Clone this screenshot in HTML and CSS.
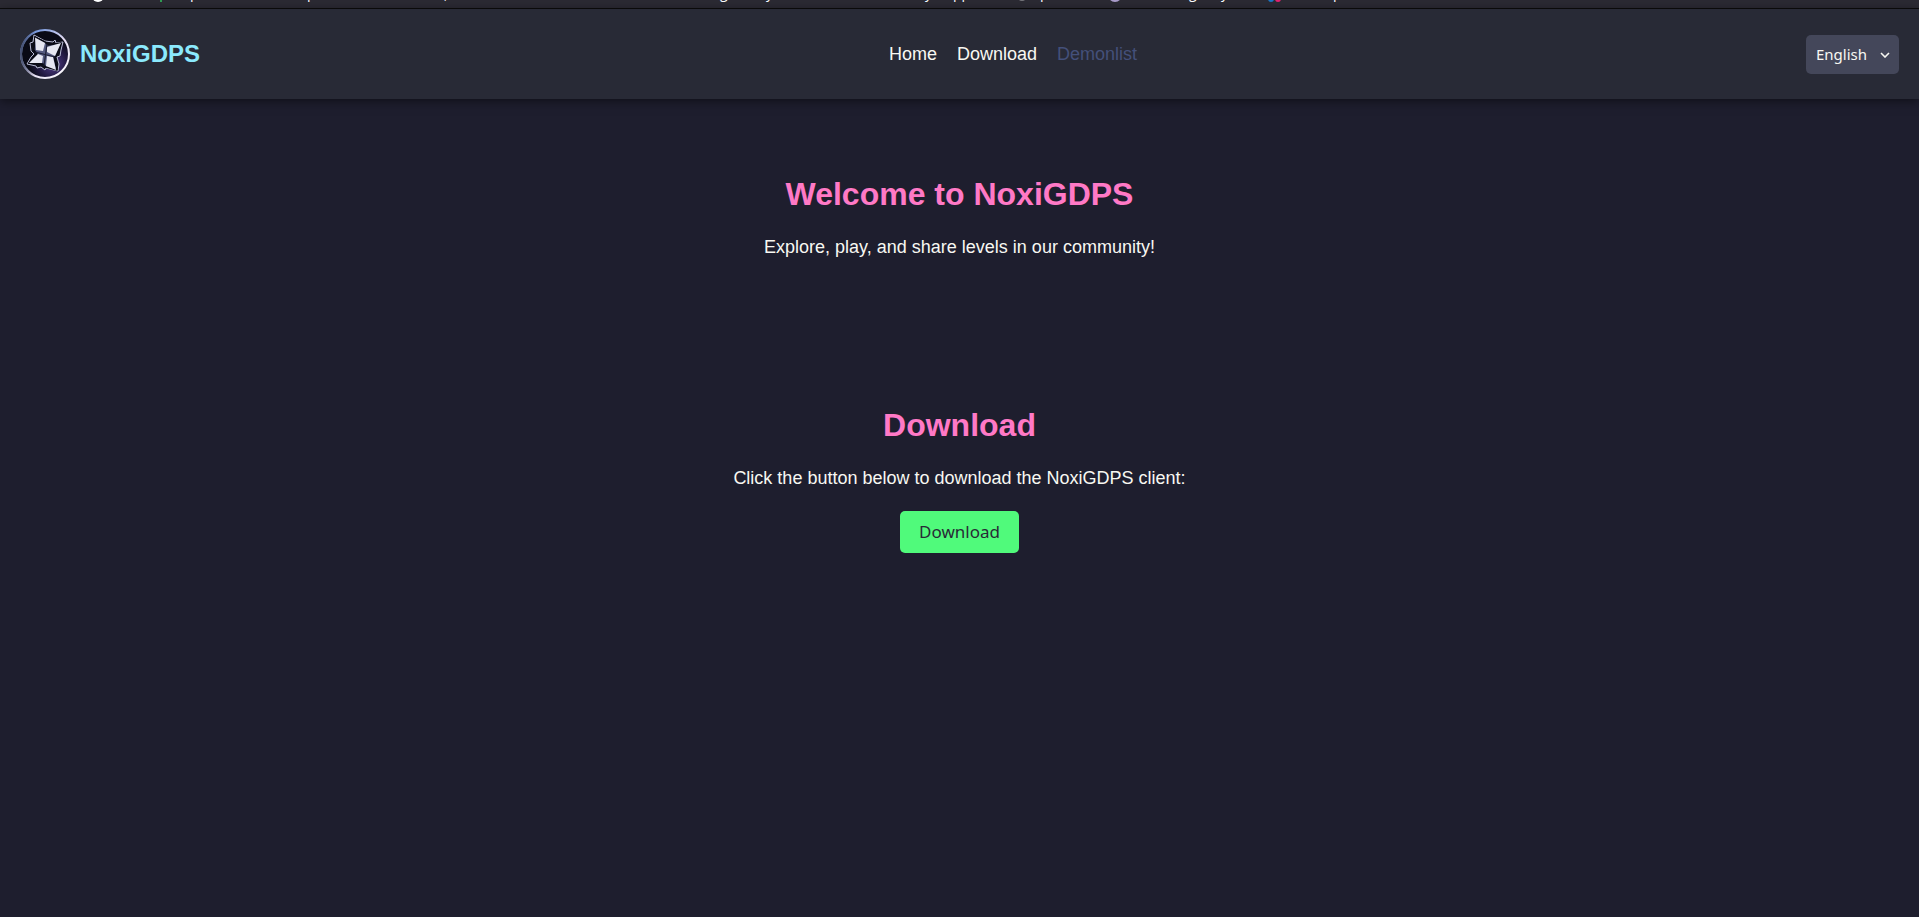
FILE: index.html
```html
<!DOCTYPE html>
<html lang="en">
<head>
<meta charset="utf-8">
<title>NoxiGDPS</title>
<link rel="stylesheet" href="styles.css">
</head>
<body>
<div class="bookmarks" aria-hidden="true">
  <svg class="bookmarks-row" height="8">
    <circle cx="98" cy="-4" r="6" fill="#fff"/>
    <rect x="160" y="0" width="2" height="2" fill="#2f9a52"/>
    <g class="bookmarks-text">
      <text x="190" y="-2">p</text><text x="307" y="-2">p</text><text x="444" y="-1">,</text>
      <text x="720" y="-2">g</text><text x="766" y="-2">y</text><text x="925" y="-2">y</text>
      <text x="953" y="-2">pp</text><text x="1040" y="-2">p</text>
      <text x="1189" y="-2">g</text><text x="1221" y="-2">y</text><text x="1333" y="-2">p</text>
    </g>
    <circle cx="1022" cy="-3" r="4" fill="#77777c"/>
    <circle cx="1115" cy="-5" r="6" fill="none" stroke="#a99bc9" stroke-width="2"/>
    <circle cx="1271" cy="-1" r="3" fill="#1976c5"/>
    <circle cx="1278" cy="-1" r="3" fill="#e3206f"/>
  </svg>
</div>
<header class="header">
  <div class="brand">
    <svg class="brand-logo" viewBox="0 0 50 50" role="img" aria-label="NoxiGDPS logo">
      <defs>
        <linearGradient id="ring" x1="0" y1="0" x2="1" y2="1">
          <stop offset="0" stop-color="#5874b8"/>
          <stop offset=".2" stop-color="#7f9ee0"/>
          <stop offset=".55" stop-color="#e4dcf2"/>
          <stop offset="1" stop-color="#fff"/>
        </linearGradient>
        <linearGradient id="ring-shade" x1="0" y1="0" x2="1" y2="0">
          <stop offset="0" stop-color="#39405a" stop-opacity=".85"/>
          <stop offset=".3" stop-color="#39405a" stop-opacity="0"/>
        </linearGradient>
        <radialGradient id="glow" cx=".66" cy=".7" r=".5">
          <stop offset="0" stop-color="#54408c"/>
          <stop offset=".6" stop-color="#221a42"/>
          <stop offset="1" stop-color="#090a15"/>
        </radialGradient>
      </defs>
      <circle cx="25" cy="25" r="24" fill="url(#glow)"/>
      <circle cx="25" cy="25" r="24" fill="none" stroke="url(#ring)" stroke-width="2"/>
      <circle cx="25" cy="25" r="24" fill="none" stroke="url(#ring-shade)" stroke-width="2"/>
      <path d="M14 6 25 12 33 13 35 11 36 14 43 13 41 21 40 27 37 28 39 35 38 42 26 39 25 41 21 38 17 39 16 37 7 35 11 28 14 25 11 22 10 14 13 13Z" fill="#0d0e1b" stroke="#b9bcd6" stroke-width="1" stroke-linejoin="round"/>
      <path d="M15 8 25 13 28 16 41 14 36 27 34 28 37 41 26 38 23 35 9 34 17 25 14 21Z" fill="#555a80" stroke="#090a14" stroke-width="1.4" stroke-linejoin="round"/>
      <g fill="#e6e7f2">
        <path d="M15 8.500 25 14 23 22 16 21Z"/>
        <path d="M27 18 41 14 35 27 27 23Z"/>
        <path d="M18 25 23 27 22 34 9 34Z"/>
        <path d="M27 27 33 28 36 41 26 37Z"/>
      </g>
      <path d="M27 15 24 37M15 23 35 28" fill="none" stroke="#1b1e35" stroke-width="1.2"/>
    </svg>
    <span class="brand-name">NoxiGDPS</span>
  </div>
  <nav class="nav">
    <a class="nav-link" href="#home">Home</a>
    <a class="nav-link" href="#download">Download</a>
    <a class="nav-link nav-link-muted" href="#demonlist">Demonlist</a>
  </nav>
  <div class="language">
    <select class="language-select" aria-label="Language">
      <option>English</option>
    </select>
    <svg class="language-arrow" viewBox="0 0 10 6" aria-hidden="true"><path d="M1 1l4 4 4-4" fill="none" stroke="#f8f8f2" stroke-width="1.6"/></svg>
  </div>
</header>
<main class="content">
  <section class="section" id="home">
    <h1 class="section-title">Welcome to NoxiGDPS</h1>
    <p class="section-text">Explore, play, and share levels in our community!</p>
  </section>
  <section class="section" id="download">
    <h2 class="section-title">Download</h2>
    <p class="section-text">Click the button below to download the NoxiGDPS client:</p>
    <button class="download-button" type="button">Download</button>
  </section>
</main>
</body>
</html>
```
FILE: styles.css
```css
* {
  box-sizing: border-box;
}

body {
  margin: 0;
  min-height: 100vh;
  background: #1e1e2e;
  color: #f8f8f2;
  font-family: "Liberation Sans", Arial, sans-serif;
  font-size: 18px;
}

.bookmarks {
  background: #2b2a33;
  border-bottom: 1px solid #0c0c0d;
}

.bookmarks-row {
  display: block;
  width: 100%;
  overflow: hidden;
}

.bookmarks-text {
  fill: #fbfbfe;
  font-family: "Open Sans", sans-serif;
  font-size: 14px;
}

.header {
  display: flex;
  align-items: center;
  justify-content: space-between;
  padding: 20px;
  background: #282a36;
  box-shadow: 0 2px 10px rgba(0, 0, 0, 0.5);
}

.brand {
  display: flex;
  align-items: center;
  gap: 10px;
}

.brand-logo {
  width: 50px;
  height: 50px;
}

.brand-name {
  color: #8be9fd;
  font-size: 24px;
  font-weight: bold;
}

.nav {
  display: flex;
}

.nav-link {
  margin-left: 20px;
  color: #f8f8f2;
  text-decoration: none;
}

.nav-link-muted {
  color: #44507a;
}

.language {
  position: relative;
}

.language-select {
  display: block;
  width: 93px;
  height: 39px;
  padding: 0 10px;
  border: 0;
  border-radius: 5px;
  appearance: none;
  background: #44475a;
  color: #f8f8f2;
  font-family: "Noto Sans", sans-serif;
  font-size: 15px;
}

.language-arrow {
  position: absolute;
  top: 17px;
  right: 9px;
  width: 10px;
  height: 6px;
  pointer-events: none;
}

.section {
  display: flex;
  flex-direction: column;
  align-items: center;
  padding: 77px 20px 73px;
  text-align: center;
}

.section-title {
  margin: 0 0 25px;
  color: #ff79c6;
  font-size: 32px;
  line-height: 36px;
}

.section-text {
  margin: 0;
  line-height: 20px;
}

.download-button {
  margin-top: 23px;
  padding: 10px 19px;
  border: 0;
  border-radius: 5px;
  background: #50fa7b;
  color: #282a36;
  font-family: "Noto Sans", sans-serif;
  font-size: 17px;
  line-height: 22px;
}
```
